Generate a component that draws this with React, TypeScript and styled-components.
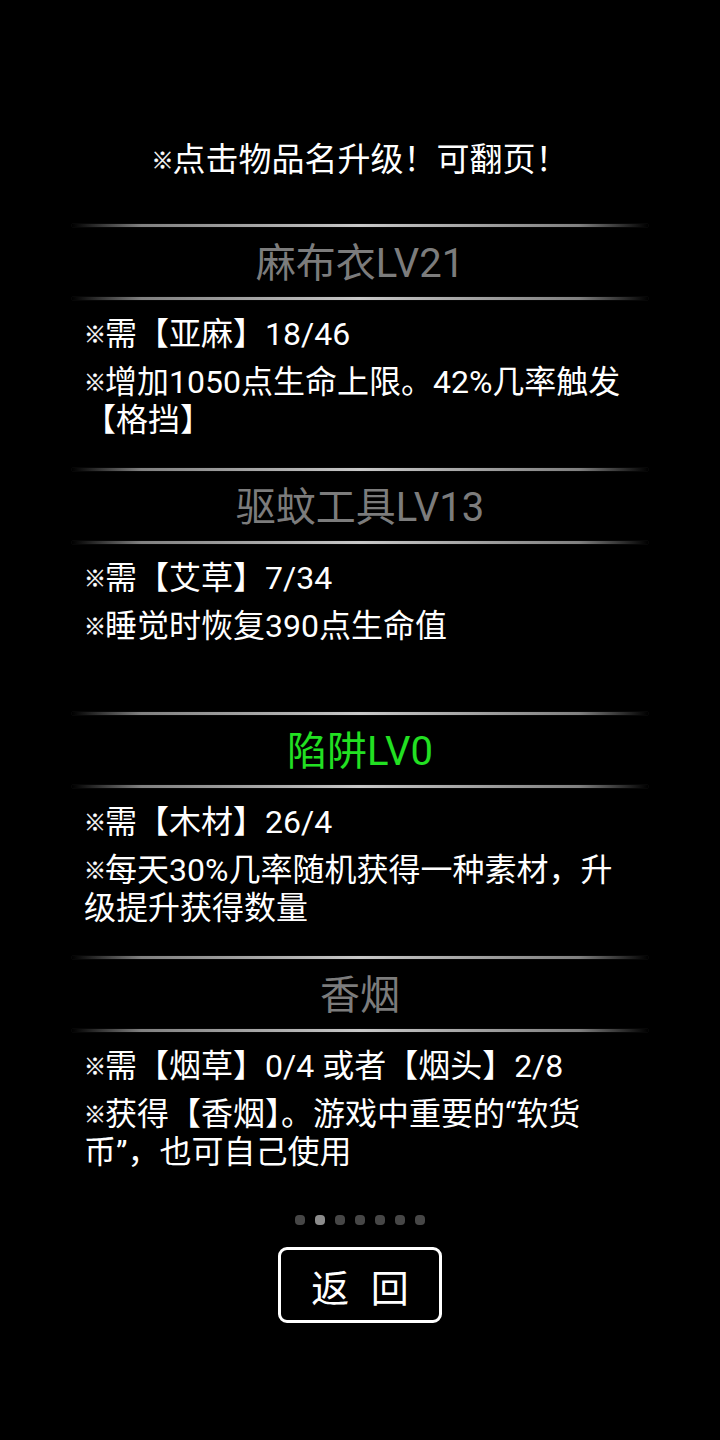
import React from 'react'
import styled, { createGlobalStyle, css } from 'styled-components'

const GlobalStyle = createGlobalStyle`
  html, body {
    margin: 0;
    padding: 0;
    background: #000;
  }
  body {
    font-family: Roboto, "Noto Sans CJK SC", sans-serif;
    color: #fff;
  }
`

// small reference mark in front of hint and body lines
const mark = css`
  &::before {
    content: '※';
    font-size: 22px;
    line-height: 1;
    vertical-align: 0.12em;
    margin-right: -1px;
    font-family: "Noto Sans CJK SC", sans-serif;
    -webkit-text-stroke: 0.4px #fff;
  }
`

const Page = styled.main`
  width: 720px;
  min-height: 1440px;
  background: #000;
  display: flex;
  flex-direction: column;
  align-items: center;
  padding-top: 141px;
  box-sizing: border-box;
`

const Hint = styled.div`
  font-size: 33px;
  line-height: 38px;
  height: 38px;
  text-align: center;
  margin-bottom: 45px;
  ${mark}
`

const List = styled.div`
  width: 720px;
  display: flex;
  flex-direction: column;
`

const Section = styled.section`
  height: 244px;
  display: flex;
  flex-direction: column;
  align-items: center;
`

const Divider = styled.div`
  width: 576px;
  height: 3px;
  flex-shrink: 0;
  background: linear-gradient(
    to right,
    rgba(160, 160, 160, 0) 0%,
    rgba(160, 160, 160, 0.8) 12%,
    #c8c8c8 50%,
    rgba(160, 160, 160, 0.8) 88%,
    rgba(160, 160, 160, 0) 100%
  );
  box-shadow: 0 0 1px rgba(120, 120, 120, 0.6);
`

const Title = styled.button<{ $active?: boolean }>`
  height: 70px;
  border: none;
  background: none;
  padding: 0 0 4px;
  font-family: Roboto, "Noto Sans CJK SC", sans-serif;
  font-size: 40px;
  color: ${(p) => (p.$active ? '#22e022' : '#7c7c7c')};
  display: flex;
  align-items: center;
  justify-content: center;
  cursor: pointer;
`

const Body = styled.div`
  width: 552px;
  padding-top: 15px;
  display: flex;
  flex-direction: column;
  gap: 10px;
`

const Line = styled.p`
  margin: 0;
  font-size: 32px;
  line-height: 38px;
  color: #fff;
  ${mark}
`

const Dots = styled.div`
  display: flex;
  gap: 10px;
  margin-top: 15px;
`

const Dot = styled.span<{ $active?: boolean }>`
  width: 10px;
  height: 10px;
  border-radius: 4px;
  background: ${(p) => (p.$active ? '#8c8c8c' : '#474747')};
`

const BackButton = styled.button`
  margin-top: 22px;
  width: 164px;
  height: 76px;
  box-sizing: border-box;
  border: 3px solid #fff;
  border-radius: 9px;
  background: #000;
  color: #fff;
  font-family: Roboto, "Noto Sans CJK SC", sans-serif;
  font-size: 38px;
  letter-spacing: 6px;
  padding: 0 0 0 6px;
  display: flex;
  align-items: center;
  justify-content: center;
  cursor: pointer;
`

interface Item {
  name: string
  active?: boolean
  lines: string[]
}

const items: Item[] = [
  {
    name: '麻布衣LV21',
    lines: ['需【亚麻】18/46', '增加1050点生命上限。42%几率触发【格挡】'],
  },
  {
    name: '驱蚊工具LV13',
    lines: ['需【艾草】7/34', '睡觉时恢复390点生命值'],
  },
  {
    name: '陷阱LV0',
    active: true,
    lines: ['需【木材】26/4', '每天30%几率随机获得一种素材，升级提升获得数量'],
  },
  {
    name: '香烟',
    lines: ['需【烟草】0/4 或者【烟头】2/8', '获得【香烟】。游戏中重要的“软货币”，也可自己使用'],
  },
]

const App: React.FC = () => {
  return (
    <>
      <GlobalStyle />
      <Page>
        <Hint>点击物品名升级！可翻页！</Hint>
        <List>
          {items.map((item) => (
            <Section key={item.name}>
              <Divider />
              <Title $active={item.active}>{item.name}</Title>
              <Divider />
              <Body>
                {item.lines.map((line) => (
                  <Line key={line}>{line}</Line>
                ))}
              </Body>
            </Section>
          ))}
        </List>
        <Dots>
          {Array.from({ length: 7 }).map((_, i) => (
            <Dot key={i} $active={i === 1} />
          ))}
        </Dots>
        <BackButton>返 回</BackButton>
      </Page>
    </>
  )
}

export default App
